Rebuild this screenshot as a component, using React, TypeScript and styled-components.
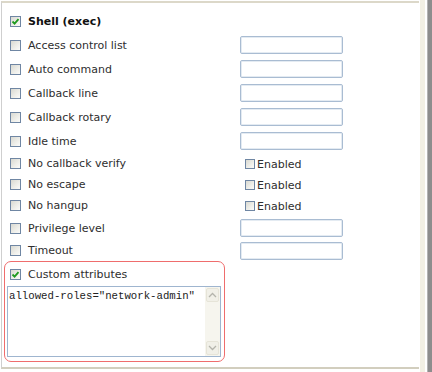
import styled, { createGlobalStyle } from 'styled-components';

const GlobalStyle = createGlobalStyle`
  html, body {
    margin: 0;
    padding: 0;
    background: #fff;
  }
  body {
    font-family: "DejaVu Sans", Verdana, sans-serif;
    font-size: 11px;
    color: #2e2e2e;
  }
`;

type Option = {
  label: string;
  kind: 'text' | 'toggle' | 'none';
};

const options: Option[] = [
  { label: 'Access control list', kind: 'text' },
  { label: 'Auto command', kind: 'text' },
  { label: 'Callback line', kind: 'text' },
  { label: 'Callback rotary', kind: 'text' },
  { label: 'Idle time', kind: 'text' },
  { label: 'No callback verify', kind: 'toggle' },
  { label: 'No escape', kind: 'toggle' },
  { label: 'No hangup', kind: 'toggle' },
  { label: 'Privilege level', kind: 'text' },
  { label: 'Timeout', kind: 'text' },
];

const rowHeight = (o: Option, i: number) => {
  if (o.kind === 'toggle') return 21;
  if (i === options.length - 1) return 21;
  return 24;
};

const CheckBox = ({ checked, small }: { checked?: boolean; small?: boolean }) => (
  <Box $small={small}>
    {checked && (
      <svg width="9" height="9" viewBox="0 0 9 9">
        <path d="M1.5 4.5 L3.6 6.6 L7.5 2.2" fill="none" stroke="#1f9a1f" strokeWidth="1.8" />
      </svg>
    )}
  </Box>
);

const Chevron = ({ up }: { up?: boolean }) => (
  <svg width="9" height="6" viewBox="0 0 9 6">
    <path
      d={up ? 'M1 5 L4.5 1.5 L8 5' : 'M1 1 L4.5 4.5 L8 1'}
      fill="none"
      stroke="#b4b4ac"
      strokeWidth="1.3"
    />
  </svg>
);

const App = () => {
  return (
    <>
      <GlobalStyle />
      <Screen>
        <Panel>
          <Row $h={24}>
            <CheckBox checked />
            <Title>Shell (exec)</Title>
          </Row>
          {options.map((o, i) => (
            <Row key={o.label} $h={rowHeight(o, i)}>
              <CheckBox />
              <Label>{o.label}</Label>
              {o.kind === 'text' && <Field type="text" />}
              {o.kind === 'toggle' && (
                <Enabled>
                  <CheckBox small />
                  <span>Enabled</span>
                </Enabled>
              )}
            </Row>
          ))}
          <CustomGroup>
            <Row $h={24} $inset={5}>
              <CheckBox checked />
              <Label>Custom attributes</Label>
            </Row>
            <TextBox>
              <TextContent>allowed-roles="network-admin"</TextContent>
              <ScrollBar>
                <ArrowButton>
                  <Chevron up />
                </ArrowButton>
                <ArrowButton>
                  <Chevron />
                </ArrowButton>
              </ScrollBar>
            </TextBox>
          </CustomGroup>
        </Panel>
        <Edge>
          <CreamStrip />
          <DarkStrip />
        </Edge>
      </Screen>
    </>
  );
};

export default App;

const Screen = styled.div`
  display: flex;
  width: 432px;
  height: 372px;
  overflow: hidden;
`;

const Panel = styled.div`
  box-sizing: border-box;
  width: 420px;
  height: 368px;
  margin: 1px 0 0 1px;
  padding: 6px 0 0 2px;
  border-top: 2px solid #dcd8c9;
  border-left: 1px solid #cfcfcf;
  border-bottom: 2px solid #d2cebe;
  display: flex;
  flex-direction: column;
`;

const Row = styled.div<{ $h: number; $inset?: number }>`
  display: flex;
  align-items: center;
  height: ${(p) => p.$h}px;
  padding-left: ${(p) => p.$inset ?? 6}px;
  flex: none;
`;

const Box = styled.span<{ $small?: boolean }>`
  box-sizing: border-box;
  display: inline-flex;
  align-items: center;
  justify-content: center;
  width: ${(p) => (p.$small ? 10 : 11)}px;
  height: ${(p) => (p.$small ? 10 : 11)}px;
  border: 1px solid #6f86a3;
  background: linear-gradient(135deg, #d9d9d1 0%, #efefea 60%, #fbfbf9 100%);
  flex: none;
`;

const Title = styled.span`
  margin-left: 7px;
  font-weight: bold;
  color: #111;
`;

const Label = styled.span`
  margin-left: 7px;
  width: 212px;
  flex: none;
  white-space: nowrap;
`;

const Field = styled.input`
  box-sizing: border-box;
  width: 103px;
  height: 18px;
  margin: 0;
  border: 1px solid #a9bcd2;
  border-radius: 2px;
  box-shadow: inset 0 0 0 1px #e4ebf2;
  background: #fff;
  outline: none;
`;

const Enabled = styled.div`
  display: flex;
  align-items: center;
  gap: 2px;
  margin-left: 5px;
  padding-top: 1px;
`;

const CustomGroup = styled.div`
  box-sizing: border-box;
  width: 221px;
  height: 101px;
  padding: 0 3px 4px 0;
  border: 1px solid #ef6d6d;
  border-radius: 7px;
  display: flex;
  flex-direction: column;
`;

const TextBox = styled.div`
  box-sizing: border-box;
  height: 71px;
  margin-left: 2px;
  border: 1px solid #9fb5cf;
  display: flex;
`;

const TextContent = styled.div`
  flex: 1;
  padding: 3px 0 0 1px;
  font-family: "Liberation Mono", "Courier New", monospace;
  font-size: 10.7px;
  color: #222;
  white-space: nowrap;
`;

const ScrollBar = styled.div`
  width: 15px;
  background: #f6f5ee;
  display: flex;
  flex-direction: column;
  justify-content: space-between;
  padding: 1px 0;
`;

const ArrowButton = styled.div`
  box-sizing: border-box;
  height: 14px;
  margin: 0 1px;
  border: 1px solid #e6e4d8;
  border-radius: 2px;
  background: #f1f0e8;
  display: flex;
  align-items: center;
  justify-content: center;
`;

const Edge = styled.div`
  display: flex;
  margin-left: 1px;
  height: 372px;
`;

const CreamStrip = styled.div`
  width: 5px;
  background: #f2f0e4;
  margin-right: 2px;
`;

const DarkStrip = styled.div`
  width: 4px;
  background: #8d8d8d;
  border-left: 1px solid #b3b3b3;
`;
